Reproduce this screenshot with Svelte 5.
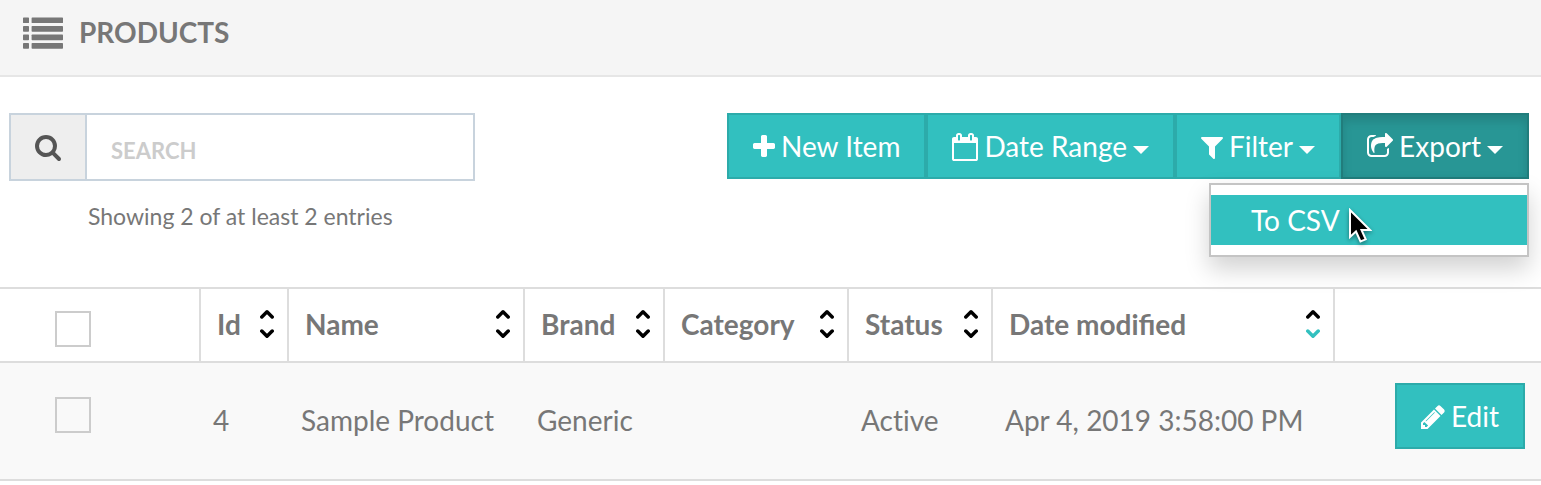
<script lang="ts">
	type Column = { label: string; width: number; sortable: boolean; sorted?: 'asc' | 'desc' };

	const columns: Column[] = [
		{ label: 'Id', width: 88, sortable: true },
		{ label: 'Name', width: 236, sortable: true },
		{ label: 'Brand', width: 140, sortable: true },
		{ label: 'Category', width: 184, sortable: true },
		{ label: 'Status', width: 144, sortable: true },
		{ label: 'Date modified', width: 342, sortable: true, sorted: 'desc' }
	];

	const rows = [
		{ id: 4, cells: ['4', 'Sample Product', 'Generic', '', 'Active', 'Apr 4, 2019 3:58:00 PM'] }
	];

	// 1792 units per em, drawn at the text size
	const icons = {
		plus: {
			x: 192,
			width: 1408,
			path: 'M1600 736v192q0 40-28 68t-68 28h-416v416q0 40-28 68t-68 28h-192q-40 0-68-28t-28-68v-416h-416q-40 0-68-28t-28-68v-192q0-40 28-68t68-28h416v-416q0-40 28-68t68-28h192q40 0 68 28t28 68v416h416q40 0 68 28t28 68z'
		},
		calendar: {
			x: 64,
			width: 1664,
			path: 'M192 1664h1408v-1024h-1408v1024zm384-1216v-288q0-14-9-23t-23-9h-64q-14 0-23 9t-9 23v288q0 14 9 23t23 9h64q14 0 23-9t9-23zm768 0v-288q0-14-9-23t-23-9h-64q-14 0-23 9t-9 23v288q0 14 9 23t23 9h64q14 0 23-9t9-23zm384-64v1280q0 52-38 90t-90 38h-1408q-52 0-90-38t-38-90v-1280q0-52 38-90t90-38h128v-96q0-66 47-113t113-47h64q66 0 113 47t47 113v96h384v-96q0-66 47-113t113-47h64q66 0 113 47t47 113v96h128q52 0 90 38t38 90z'
		},
		filter: {
			x: 192,
			width: 1408,
			path: 'M1595 295q17 41-14 70l-493 493v742q0 42-39 59-13 5-25 5-27 0-45-19l-256-256q-19-19-19-45v-486l-493-493q-31-29-14-70 17-39 59-39h1280q42 0 59 39z'
		},
		share: {
			x: 64,
			width: 1664,
			path: 'M1472 989v259q0 119-84.5 203.5t-203.5 84.5h-832q-119 0-203.5-84.5t-84.5-203.5v-832q0-119 84.5-203.5t203.5-84.5h255q13 0 22.5 9.5t9.5 22.5q0 27-26 32-77 26-133 60-10 4-16 4h-112q-66 0-113 47t-47 113v832q0 66 47 113t113 47h832q66 0 113-47t47-113v-214q0-19 18-29 28-13 54-37 16-16 35-8 21 9 21 29zm237-496l-384 384q-18 19-45 19-12 0-25-5-39-17-39-59v-192h-160q-323 0-438 131-119 137-74 473 3 23-20 34-8 2-12 2-16 0-26-13-10-14-21-31t-39.5-68.5-49.5-99.5-38.5-114-17.5-122q0-49 3.5-91t14-90 28-88 47-81.5 68.5-74 94.5-61.5 124.5-48.5 159.5-30.5 196.5-11h160v-192q0-42 39-59 13-5 25-5 26 0 45 19l384 384q19 19 19 45t-19 45z'
		},
		pencil: {
			x: 128,
			width: 1536,
			path: 'M491 1536l91-91-235-235-91 91v107h128v128h107zm523-928q0-22-22-22-10 0-17 7l-542 542q-7 7-7 17 0 22 22 22 10 0 17-7l542-542q7-7 7-17zm-54-192l416 416-832 832h-416v-416zm683 96q0 53-37 90l-166 166-416-416 166-165q36-38 90-38 53 0 91 38l235 234q37 39 37 91z'
		},
		search: {
			x: 64,
			width: 1664,
			path: 'M1216 832q0-185-131.5-316.5t-316.5-131.5-316.5 131.5-131.5 316.5 131.5 316.5 316.5 131.5 316.5-131.5 131.5-316.5zm512 832q0 52-38 90t-90 38q-54 0-90-38l-343-342q-179 124-399 124-143 0-273.5-55.5t-225-150-150-225-55.5-273.5 55.5-273.5 150-225 225-150 273.5-55.5 273.5 55.5 225 150 150 225 55.5 273.5q0 220-124 399l343 343q37 37 37 90z'
		}
	};

	let exportOpen = $state(true);
	let search = $state('');
</script>

{#snippet icon(name: keyof typeof icons)}
	<svg
		class="icon"
		viewBox="{icons[name].x} 0 {icons[name].width} 1792"
		width={icons[name].width / 64}
		height="28"
		aria-hidden="true"
	>
		<path d={icons[name].path} />
	</svg>
{/snippet}

<header class="page-header">
	<svg class="list-icon" viewBox="0 0 40 32" width="40" height="32" aria-hidden="true">
		{#each [0.4, 9, 17.6, 26] as y}
			<rect x="0" {y} width="6" height="5.7" rx="0.7" />
			<rect x="8.6" {y} width="31.4" height="5.7" rx="0.7" />
		{/each}
	</svg>
	<h1>Products</h1>
</header>

<div class="toolbar">
	<div class="search">
		<label class="search-box">
			<span class="addon">{@render icon('search')}</span>
			<input type="text" placeholder="SEARCH" aria-label="Search" bind:value={search} />
		</label>
		<p class="count">Showing 2 of at least 2 entries</p>
	</div>

	<div class="actions">
		<button class="btn" type="button">{@render icon('plus')} New Item</button>
		<button class="btn" type="button">
			{@render icon('calendar')} Date Range <span class="caret"></span>
		</button>
		<button class="btn" type="button">
			{@render icon('filter')} Filter <span class="caret"></span>
		</button>
		<button
			class="btn"
			class:open={exportOpen}
			type="button"
			aria-expanded={exportOpen}
			onclick={() => (exportOpen = !exportOpen)}
		>
			{@render icon('share')} Export <span class="caret"></span>
		</button>
		{#if exportOpen}
			<ul class="menu">
				<li>
					<a href="#csv">To CSV</a>
					<svg class="pointer" viewBox="0 0 24 36" width="24" height="36" aria-hidden="true">
						<path d="M2 2v27l6-5.5 4.5 10 5.2-2.2-4.2-9.3h8.5z" />
					</svg>
				</li>
			</ul>
		{/if}
	</div>
</div>

<table>
	<colgroup>
		<col style="width: 201px" />
		{#each columns as column}
			<col style="width: {column.width}px" />
		{/each}
		<col />
	</colgroup>
	<thead>
		<tr>
			<th class="check"><input type="checkbox" aria-label="Select all" /></th>
			{#each columns as column}
				<th>
					<div class="heading">
						{column.label}
						{#if column.sortable}
							<svg class="sort" viewBox="0 0 14 30" width="14" height="30" aria-hidden="true">
								<path class:active={column.sorted === 'asc'} d="M1.8 7.9L7 2.8l5.2 5.1" />
								<path class:active={column.sorted === 'desc'} d="M1.8 22.1L7 27.2l5.2-5.1" />
							</svg>
						{/if}
					</div>
				</th>
			{/each}
			<th></th>
		</tr>
	</thead>
	<tbody>
		{#each rows as row (row.id)}
			<tr>
				<td class="check"><input type="checkbox" aria-label="Select row {row.id}" /></td>
				{#each row.cells as cell}
					<td>{cell}</td>
				{/each}
				<td class="edit">
					<button class="btn" type="button">{@render icon('pencil')} Edit</button>
				</td>
			</tr>
		{/each}
	</tbody>
</table>

<style>
	:global(body) {
		margin: 0;
		background: #fff;
		color: #777;
		font-family: Lato, 'Open Sans', sans-serif;
		font-size: 28px;
		line-height: 40px;
	}

	.page-header {
		display: flex;
		align-items: center;
		gap: 16px;
		padding: 13px 23px 22px;
		background: #f5f5f5;
		border-bottom: 2px solid #e6e6e6;
	}
	h1 {
		margin: 0;
		padding-bottom: 2px;
		font-size: 28px;
		font-weight: 700;
		line-height: 38px;
		text-transform: uppercase;
	}
	.list-icon {
		fill: #777;
	}

	.icon {
		fill: currentColor;
		overflow: visible;
	}

	.toolbar {
		display: flex;
		justify-content: space-between;
		align-items: flex-start;
		padding: 36px 12px 53px 9px;
	}
	.search {
		width: 466px;
	}
	.search-box {
		display: flex;
		box-sizing: border-box;
		height: 68px;
		border: 2px solid #c8d3dd;
	}
	.addon {
		display: flex;
		align-items: center;
		justify-content: center;
		width: 74px;
		background: #eee;
		border-right: 2px solid #c8d3dd;
		color: #555;
	}
	.search-box input {
		flex: 1;
		min-width: 0;
		padding: 6px 24px 0;
		border: 0;
		outline: 0;
		background: #fff;
		color: #555;
		font: 700 22px Lato, sans-serif;
	}
	.search-box input::placeholder {
		color: #ccc;
		opacity: 1;
	}
	.count {
		margin: 17px 0 0 79px;
		font-size: 23px;
		line-height: 36px;
	}

	.actions {
		position: relative;
		display: flex;
	}
	.btn {
		display: inline-flex;
		align-items: center;
		gap: 6px;
		padding: 11px 24px;
		background: #32c0bf;
		border: 2px solid #2cabaa;
		color: #fff;
		font: inherit;
		white-space: nowrap;
		cursor: pointer;
	}
	.btn.open {
		background: #289695;
		border-color: #217d7c;
		box-shadow: inset 0 6px 10px rgba(0, 0, 0, 0.125);
	}
	.btn .icon {
		margin-top: 2px;
	}
	.caret {
		border: 8px solid transparent;
		border-top-color: #fff;
		border-bottom: 0;
		margin-top: 8px;
	}

	.menu {
		position: absolute;
		top: 100%;
		right: 0;
		box-sizing: border-box;
		width: 320px;
		margin: 4px 0 0;
		padding: 10px 0;
		list-style: none;
		background: #fff;
		border: 2px solid #c4c4c4;
		box-shadow: 0 12px 24px rgba(0, 0, 0, 0.18);
	}
	.menu li {
		position: relative;
	}
	.menu a {
		display: block;
		padding: 5px 40px;
		background: #32c0bf;
		color: #fff;
		text-decoration: none;
	}
	.pointer {
		position: absolute;
		left: 137px;
		top: 13px;
		fill: #000;
		stroke: #fff;
		stroke-width: 2;
		filter: drop-shadow(0 2px 2px rgba(0, 0, 0, 0.4));
	}

	table {
		width: 100%;
		table-layout: fixed;
		border-collapse: separate;
		border-spacing: 0;
		border-top: 2px solid #ddd;
	}
	th,
	td {
		box-sizing: border-box;
		border-bottom: 2px solid #ddd;
		text-align: left;
		white-space: nowrap;
	}
	th {
		height: 74px;
		padding: 0 13px 2px 16px;
		border-right: 2px solid #ddd;
	}
	th:last-child {
		border-right: 0;
	}
	td {
		height: 118px;
		padding: 0 12px 2px;
		background: #f9f9f9;
		font-variant-ligatures: none;
	}
	.heading {
		display: flex;
		align-items: center;
		justify-content: space-between;
	}
	.sort {
		fill: none;
		stroke: #000;
		stroke-width: 3.5;
		stroke-linecap: round;
		stroke-linejoin: round;
	}
	.sort .active {
		stroke: #32c0bf;
	}

	.check {
		padding: 0 0 0 55px;
		vertical-align: top;
	}
	.check input {
		display: block;
		appearance: none;
		box-sizing: border-box;
		width: 36px;
		height: 36px;
		margin: 22px 0 0;
		border: 2px solid #ccc;
	}
	td.check input {
		margin-top: 34px;
	}
	.check input:checked {
		background: #32c0bf;
	}
	.edit {
		padding: 20px 16px 0;
		text-align: right;
		vertical-align: top;
	}
</style>
